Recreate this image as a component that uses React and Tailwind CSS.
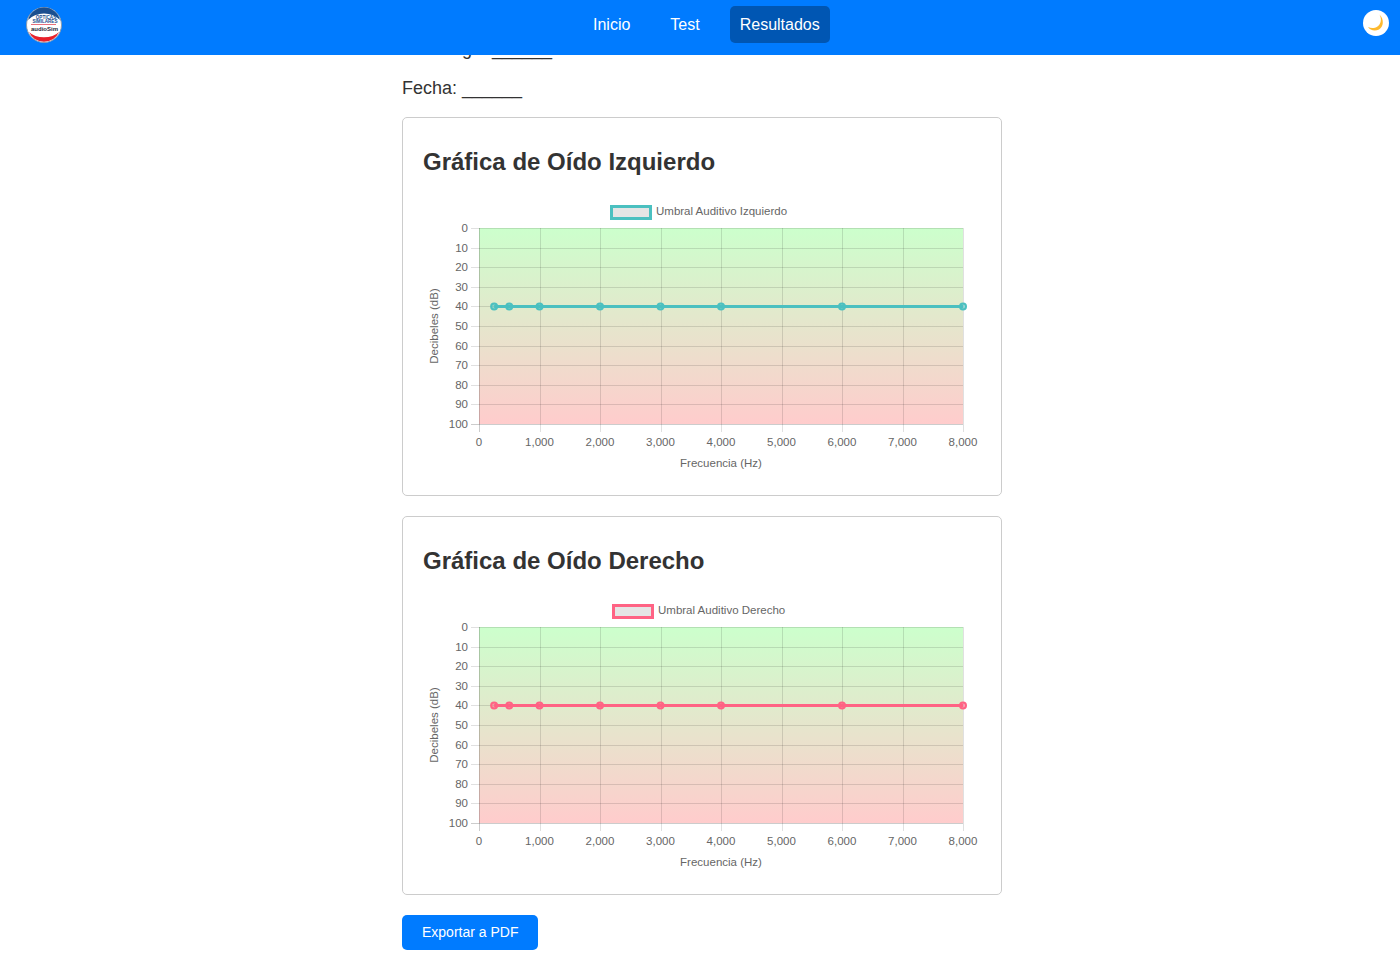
import { Fragment } from "react";

// Plot area inside the 558x279 chart, in chart pixels
const PLOT = { left: 56, right: 540, top: 32, bottom: 228 };
const X_TICKS = [0, 1000, 2000, 3000, 4000, 5000, 6000, 7000, 8000];
const Y_TICKS = [0, 10, 20, 30, 40, 50, 60, 70, 80, 90, 100];
const FREQS = [250, 500, 1000, 2000, 3000, 4000, 6000, 8000];

const xPos = (hz) => PLOT.left + (hz / 8000) * (PLOT.right - PLOT.left);
const yPos = (db) => PLOT.top + (db / 100) * (PLOT.bottom - PLOT.top);
const crisp = (v) => Math.round(v) + 0.5;

function AudioChart({ id, label, color, legendX }) {
  const lineY = yPos(40);

  return (
    <svg width="558" height="279" viewBox="0 0 558 279" className="block">
      <defs>
        <linearGradient id={id} x1="0" y1="0" x2="0" y2="1">
          <stop offset="0" stopColor="#ccffcc" />
          <stop offset="1" stopColor="#ffcccc" />
        </linearGradient>
      </defs>

      {/* Legend */}
      <rect x={legendX + 1.5} y="10.5" width="39" height="12" fill="#e5e5e5" stroke={color} strokeWidth="3" />
      <text x={legendX + 46} y="19" fontSize="11.5" fill="#666">
        {label}
      </text>

      {/* Background */}
      <rect x={PLOT.left} y={PLOT.top} width={PLOT.right - PLOT.left} height={PLOT.bottom - PLOT.top} fill={`url(#${id})`} />

      {/* Grid and tick labels */}
      {Y_TICKS.map((db) => (
        <Fragment key={db}>
          <line x1={PLOT.left - 8} x2={PLOT.right} y1={crisp(yPos(db))} y2={crisp(yPos(db))} stroke="#000" strokeOpacity={db === 100 ? 0.2 : 0.12} />
          <text x="45" y={yPos(db) + 4} fontSize="11.5" fill="#666" textAnchor="end">
            {db}
          </text>
        </Fragment>
      ))}
      {X_TICKS.map((hz) => (
        <Fragment key={hz}>
          <line x1={crisp(xPos(hz))} x2={crisp(xPos(hz))} y1={PLOT.top} y2={PLOT.bottom + 8} stroke="#000" strokeOpacity={hz === 0 ? 0.2 : 0.12} />
          <text x={xPos(hz)} y="250" fontSize="11.5" fill="#666" textAnchor="middle">
            {hz.toLocaleString("en-US")}
          </text>
        </Fragment>
      ))}

      {/* Axis titles */}
      <text x="298" y="271" fontSize="11.5" fill="#666" textAnchor="middle">
        Frecuencia (Hz)
      </text>
      <text transform="translate(15 130) rotate(-90)" fontSize="11.5" fill="#666" textAnchor="middle">
        Decibeles (dB)
      </text>

      {/* Series */}
      <line x1={xPos(250)} x2={xPos(8000)} y1={lineY} y2={lineY} stroke={color} strokeWidth="3" />
      {FREQS.map((hz) => (
        <circle key={hz} cx={xPos(hz)} cy={lineY} r="3" fill={color} fillOpacity="0.55" stroke={color} strokeWidth="2" />
      ))}
    </svg>
  );
}

function ChartCard({ title, ...chart }) {
  return (
    <section className="mb-5 rounded-[5px] border border-[#ccc] p-5">
      <h2 className="mt-[10px] mb-5 text-[24px] leading-[28px] font-bold text-[#333]">{title}</h2>
      <AudioChart {...chart} />
    </section>
  );
}

function Logo() {
  return (
    <svg width="38" height="36" viewBox="0 0 38 36" className="block">
      <circle cx="19" cy="18" r="17.5" fill="#fff" stroke="#8a9bb0" strokeWidth="1" />
      <path d="M3 13 A16.5 16.5 0 0 1 35 13 A20 16 0 0 0 3 13 Z" fill="#1b4f8f" />
      <path d="M4 25 A16.5 16.5 0 0 0 34 25 A18 12 0 0 1 4 25 Z" fill="#e8202a" />
      <text x="21" y="11.5" fontSize="4.6" fontWeight="700" fill="#1b4f8f" textAnchor="middle">
        ÓPTICAS
      </text>
      <text x="20" y="16" fontSize="4.6" fontWeight="700" fill="#1b4f8f" textAnchor="middle">
        SIMILARES
      </text>
      <rect x="6" y="17" width="25" height="1" fill="#e8707a" />
      <text x="19.5" y="24" fontSize="6" fontWeight="700" fill="#1f2937" textAnchor="middle">
        audioSim
      </text>
    </svg>
  );
}

function Navbar() {
  return (
    <nav className="absolute inset-x-0 top-0 flex h-[55px] items-start bg-[#007bff] pr-[11px] pl-[25px]">
      <div className="mt-[7px]">
        <Logo />
      </div>
      <ul className="mt-[6px] ml-[520px] flex gap-5 text-[16px] leading-[37px] text-white">
        <li className="px-[10px]">Inicio</li>
        <li className="px-[10px]">Test</li>
        <li className="rounded-[5px] bg-[#0056b3] px-[10px]">Resultados</li>
      </ul>
      <button className="mt-[10px] ml-auto flex h-[26px] w-[26px] items-center justify-center rounded-full bg-white">
        <svg width="20" height="20" viewBox="0 0 20 20">
          <path d="M13.5 1.5 C16 6 15 11 11.5 13.5 C8.5 15.5 5 15.5 2 14 C4 17.5 9 18.5 13 16.5 C17.5 14 18.5 6.5 13.5 1.5 Z" fill="#fdb92e" />
        </svg>
      </button>
    </nav>
  );
}

export default function App() {
  return (
    <div className="relative h-screen overflow-hidden bg-white font-['Liberation_Sans',Arial,sans-serif]">
      <Navbar />
      <main className="ml-[402px] w-[600px] pt-[39px]">
        <p className="mb-[18px] text-[18px] leading-[21px] text-[#333]">Audiólogo: ______</p>
        <p className="mb-[18px] text-[18px] leading-[21px] text-[#333]">Fecha: ______</p>

        <ChartCard id="grad-left" title="Gráfica de Oído Izquierdo" label="Umbral Auditivo Izquierdo" color="#4bc0c0" legendX={187} />
        <ChartCard id="grad-right" title="Gráfica de Oído Derecho" label="Umbral Auditivo Derecho" color="#ff6384" legendX={189} />

        <button className="h-[35px] rounded-[5px] bg-[#007bff] px-5 text-[14px] text-white">Exportar a PDF</button>
      </main>
    </div>
  );
}
